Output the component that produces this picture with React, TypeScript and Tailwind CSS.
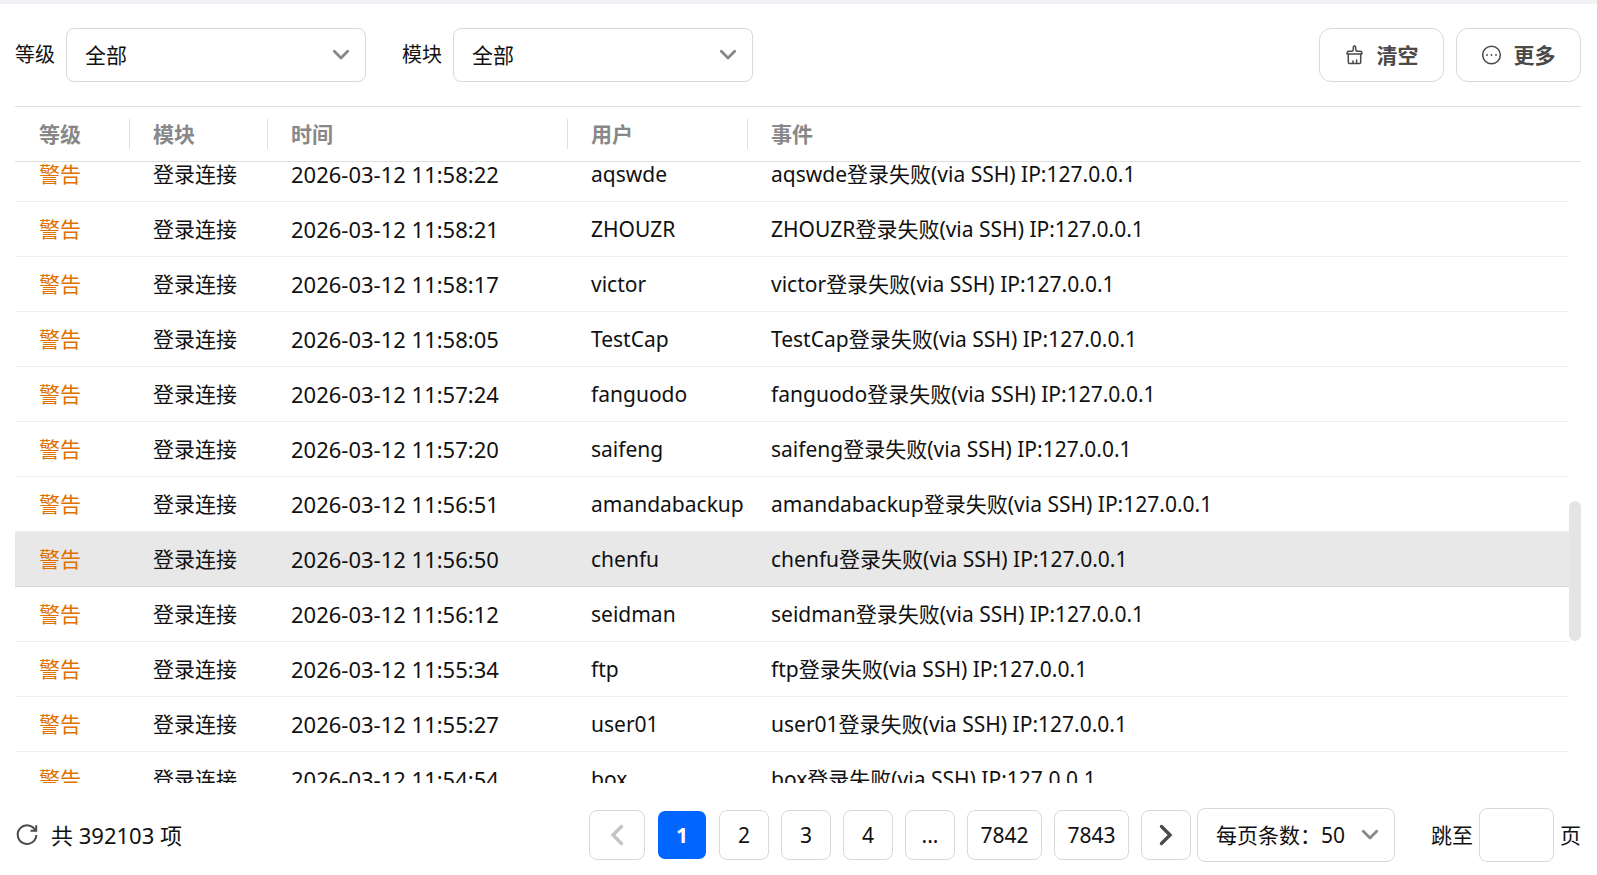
import { useLayoutEffect, useRef, useState } from "react";

interface LogItem {
  time: string;
  user: string;
}

const ROW_HEIGHT = 55;
const PAGE_SIZE = 50;
const FIRST_ROW = 27;

const logs: LogItem[] = [
  { time: "2026-03-12 11:58:22", user: "aqswde" },
  { time: "2026-03-12 11:58:21", user: "ZHOUZR" },
  { time: "2026-03-12 11:58:17", user: "victor" },
  { time: "2026-03-12 11:58:05", user: "TestCap" },
  { time: "2026-03-12 11:57:24", user: "fanguodo" },
  { time: "2026-03-12 11:57:20", user: "saifeng" },
  { time: "2026-03-12 11:56:51", user: "amandabackup" },
  { time: "2026-03-12 11:56:50", user: "chenfu" },
  { time: "2026-03-12 11:56:12", user: "seidman" },
  { time: "2026-03-12 11:55:34", user: "ftp" },
  { time: "2026-03-12 11:55:27", user: "user01" },
  { time: "2026-03-12 11:54:54", user: "box" },
];

const pages = ["1", "2", "3", "4", "...", "7842", "7843"];
const columns = ["等级", "模块", "时间", "用户", "事件"];

function Chevron() {
  return (
    <svg className="pointer-events-none absolute right-4 top-1/2 -translate-y-1/2 text-[#888]" width="18" height="12" viewBox="0 0 18 12" fill="none" stroke="currentColor" strokeWidth="2.8" strokeLinecap="round" strokeLinejoin="round">
      <path d="M2.300 2.300 9 9l6.700-6.700" />
    </svg>
  );
}

function FilterSelect({ id, label }: { id: string; label: string }) {
  return (
    <div className="flex items-center gap-[11px]">
      <label htmlFor={id} className="text-xl/8">{label}</label>
      <div className="relative">
        <select id={id} className="h-[54px] w-[300px] appearance-none rounded-lg border border-[#d9d9d9] bg-white pl-[18px] pr-10">
          <option>全部</option>
        </select>
        <Chevron />
      </div>
    </div>
  );
}

function Columns() {
  return (
    <colgroup>
      <col className="w-[114px]" />
      <col className="w-[138px]" />
      <col className="w-[300px]" />
      <col className="w-[180px]" />
      <col />
    </colgroup>
  );
}

function pageClass(p: string, current: string) {
  if (p === current) return "h-[50px] w-[50px] rounded-lg border border-transparent bg-[#0066ff] bg-clip-padding font-bold text-white";
  if (p.length > 3) return "h-[50px] w-[75px] rounded-lg border border-[#d9d9d9]";
  return "h-[50px] w-[50px] rounded-lg border border-[#d9d9d9]";
}

export default function App() {
  const bodyRef = useRef<HTMLDivElement>(null);
  const [thumb, setThumb] = useState({ top: 0, height: 0 });
  const [selected, setSelected] = useState("chenfu");
  const [page, setPage] = useState("1");

  const updateThumb = () => {
    const el = bodyRef.current;
    if (!el) return;
    const ratio = el.clientHeight / el.scrollHeight;
    setThumb({ top: el.scrollTop * ratio, height: el.clientHeight * ratio });
  };

  useLayoutEffect(() => {
    if (bodyRef.current) bodyRef.current.scrollTop = FIRST_ROW * ROW_HEIGHT + 15;
    updateThumb();
  }, []);

  return (
    <div className="flex h-screen flex-col border-t-4 border-[#f0f2f5] bg-white pb-[13px] pl-[15px] pr-4 pt-6 font-['Noto_Sans','Noto_Sans_CJK_SC',sans-serif] text-[21px] leading-[30px] text-[#111]">
      {/* Filters */}
      <div className="mb-6 flex items-center justify-between">
        <div className="flex gap-9">
          <FilterSelect id="level" label="等级" />
          <FilterSelect id="module" label="模块" />
        </div>
        <div className="flex gap-3 font-bold text-[#4a4a4a]">
          <button className="flex h-[54px] w-[125px] items-center justify-center gap-3 rounded-xl border border-[#d9d9d9]">
            <svg width="20" height="20" viewBox="0 0 20 20" fill="none" stroke="currentColor" strokeWidth="1.5" strokeLinecap="round" strokeLinejoin="round">
              <path d="M7 6.300c1-.4 1.300-1 1.300-2V2.200a1.200 1.200 0 0 1 2.400 0v2.100c0 1 .3 1.600 1.300 2h3.200a1.700 1.700 0 0 1 1.700 1.700v1H2.100V8a1.700 1.700 0 0 1 1.700-1.700z" />
              <path d="M3.300 9v8.300a1.300 1.300 0 0 0 1.300 1.300h9.800a1.300 1.300 0 0 0 1.300-1.300V9M8 18.300v-2.300M11.600 18.300v-3.300" />
            </svg>
            清空
          </button>
          <button className="flex h-[54px] w-[125px] items-center justify-center gap-3 rounded-xl border border-[#d9d9d9]">
            <svg width="20" height="20" viewBox="0 0 20 20" fill="none" stroke="currentColor" strokeWidth="1.5">
              <circle cx="9.500" cy="10" r="8.800" />
              <path d="M5 10h.01M9.500 10h.01M14 10h.01" strokeWidth="1.800" strokeLinecap="round" />
            </svg>
            更多
          </button>
        </div>
      </div>

      {/* Table */}
      <table className="w-full table-fixed border-separate border-spacing-0 border-y border-[#dedede] text-left text-[#888]">
        <Columns />
        <thead>
          <tr className="h-[54px]">
            {columns.map((name, i) => (
              <th key={name} className="p-0 font-bold">
                <div className={i === 0 ? "pl-6" : "border-l border-[#dedede] pl-[23px]"}>{name}</div>
              </th>
            ))}
          </tr>
        </thead>
      </table>
      <div className="relative min-h-0 flex-1">
        <div ref={bodyRef} onScroll={updateThumb} className="h-full overflow-y-auto pr-3 [scrollbar-width:none]">
          <div style={{ height: FIRST_ROW * ROW_HEIGHT }} />
          <table className="w-full table-fixed border-separate border-spacing-0">
            <Columns />
            <tbody>
              {logs.map((log) => (
                <tr
                  key={log.time}
                  onClick={() => setSelected(log.user)}
                  className={
                    log.user === selected
                      ? "h-[55px] bg-[#e8e8e8] *:border-b *:border-[#d9d9d9]"
                      : "h-[55px] *:border-b *:border-[#eee]"
                  }
                >
                  <td className="p-0 pl-6 text-[#e07000]">警告</td>
                  <td className="p-0 pl-6">登录连接</td>
                  <td className="p-0 pl-6 text-[22px]">{log.time}</td>
                  <td className="p-0 pl-6">{log.user}</td>
                  <td className="p-0 pl-6">{log.user}登录失败(via SSH) IP:127.0.0.1</td>
                </tr>
              ))}
            </tbody>
          </table>
          <div style={{ height: (PAGE_SIZE - FIRST_ROW - logs.length) * ROW_HEIGHT }} />
        </div>
        <div className="absolute right-0 w-3 rounded-full bg-[#e3e5e4]" style={{ top: thumb.top, height: thumb.height }} />
      </div>

      {/* Pagination */}
      <div className="mt-[25px] flex items-center justify-between">
        <div className="flex items-center gap-3">
          <button aria-label="刷新">
            <svg width="24" height="24" viewBox="0 0 24 24" fill="none" stroke="#4a4a4a" strokeWidth="2">
              <path d="M20.400 7.600A9.300 9.300 0 1 0 21.300 12" />
              <path d="M21.200 2.300v5.500h-5.700" />
            </svg>
          </button>
          <span className="text-[22px]">共 392103 项</span>
        </div>
        <div className="flex items-center">
          <div className="mr-1.5 flex gap-3">
            <button aria-label="上一页" disabled className="flex h-[50px] w-14 items-center justify-center rounded-lg border border-[#d9d9d9] text-[#c4c4c4]">
              <svg width="14" height="22" viewBox="0 0 14 22" fill="none" stroke="currentColor" strokeWidth="3.400" strokeLinecap="round">
                <path d="M11.500 2.500 3 11l8.500 8.500" />
              </svg>
            </button>
            {pages.map((p) => (
              <button key={p} onClick={() => setPage(p)} className={pageClass(p, page)}>
                {p}
              </button>
            ))}
            <button aria-label="下一页" className="flex h-[50px] w-[50px] items-center justify-center rounded-lg border border-[#d9d9d9] text-[#4a4a4a]">
              <svg width="14" height="22" viewBox="0 0 14 22" fill="none" stroke="currentColor" strokeWidth="3.400" strokeLinecap="round">
                <path d="M2.500 2.500 11 11l-8.500 8.500" />
              </svg>
            </button>
          </div>
          <div className="relative mr-9">
            <select aria-label="每页条数" className="h-[54px] w-[198px] appearance-none rounded-lg border border-[#d9d9d9] bg-white pl-[18px]">
              <option>每页条数：50</option>
            </select>
            <Chevron />
          </div>
          <label htmlFor="jump">跳至</label>
          <input id="jump" className="mx-1.5 h-[54px] w-[75px] rounded-lg border border-[#d9d9d9] px-3" />
          <span>页</span>
        </div>
      </div>
    </div>
  );
}
